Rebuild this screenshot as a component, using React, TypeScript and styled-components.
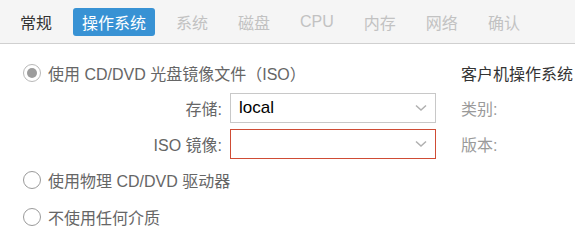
import styled, { createGlobalStyle } from "styled-components";

const GlobalStyle = createGlobalStyle`
  body {
    margin: 0;
    background: #ffffff;
    font-family: "Liberation Sans", "Noto Sans CJK SC", sans-serif;
  }
`;

const Page = styled.div`
  width: 575px;
  height: 246px;
  overflow: hidden;
  background: #ffffff;
`;

const TabBar = styled.div`
  height: 43px;
  display: flex;
  align-items: center;
  gap: 12px;
  padding-left: 11px;
  background: #f5f5f5;
  border-bottom: 1px solid #d0d0d0;
`;

const Tab = styled.div<{ $state: "normal" | "active" | "disabled" }>`
  height: 28px;
  display: flex;
  align-items: center;
  padding: 0 9px;
  border-radius: 3px;
  font-size: 16px;
  white-space: nowrap;
  background: ${(p) => (p.$state === "active" ? "#3892d4" : "transparent")};
  color: ${(p) =>
    p.$state === "active" ? "#ffffff" : p.$state === "disabled" ? "#c2c2c2" : "#333333"};
`;

const Body = styled.div`
  display: flex;
  padding: 19px 0 0 22px;
`;

const LeftColumn = styled.div`
  width: 415px;
  display: flex;
  flex-direction: column;
`;

const RightColumn = styled.div`
  margin-left: 24px;
  display: flex;
  flex-direction: column;
  white-space: nowrap;
`;

const RadioRow = styled.div<{ $gap?: number }>`
  height: 20px;
  display: flex;
  align-items: center;
  margin-top: ${(p) => p.$gap ?? 0}px;
  font-size: 16px;
  color: #666666;
  white-space: nowrap;
`;

const RadioCircle = styled.span<{ $checked?: boolean }>`
  box-sizing: border-box;
  width: 18px;
  height: 18px;
  margin-left: 1px;
  border-radius: 50%;
  border: 1.5px solid ${(p) => (p.$checked ? "#b8b8b8" : "#9a9a9a")};
  background: #ffffff;
  margin-right: 7px;
  display: flex;
  align-items: center;
  justify-content: center;
  &::after {
    content: "";
    display: ${(p) => (p.$checked ? "block" : "none")};
    width: 10px;
    height: 10px;
    border-radius: 50%;
    background: #9c9c9c;
  }
`;

const FieldRow = styled.div<{ $gap: number }>`
  height: 30px;
  display: flex;
  align-items: center;
  margin-top: ${(p) => p.$gap}px;
`;

const FieldLabel = styled.div`
  width: 200px;
  margin-right: 8px;
  text-align: right;
  font-size: 16px;
  color: #666666;
  white-space: nowrap;
`;

const Combo = styled.div<{ $invalid?: boolean }>`
  box-sizing: border-box;
  width: 206px;
  height: 30px;
  display: flex;
  align-items: center;
  padding: 0 8px;
  border: 1px solid ${(p) => (p.$invalid ? "#cf4c35" : "#c8c8c8")};
  background: #ffffff;
`;

const ComboValue = styled.span`
  flex: 1;
  font-size: 17px;
  color: #000000;
`;

const Heading = styled.div`
  height: 20px;
  display: flex;
  align-items: center;
  font-size: 16px;
  color: #333333;
`;

const SideLabel = styled.div<{ $gap: number }>`
  height: 30px;
  display: flex;
  align-items: center;
  margin-top: ${(p) => p.$gap}px;
  font-size: 16px;
  color: #9a9a9a;
`;

function Chevron() {
  return (
    <svg width="12" height="8" viewBox="0 0 12 8">
      <polyline points="1,1.5 6,6 11,1.5" fill="none" stroke="#b0b0b0" strokeWidth="1.5" />
    </svg>
  );
}

const tabs: { label: string; state: "normal" | "active" | "disabled" }[] = [
  { label: "常规", state: "normal" },
  { label: "操作系统", state: "active" },
  { label: "系统", state: "disabled" },
  { label: "磁盘", state: "disabled" },
  { label: "CPU", state: "disabled" },
  { label: "内存", state: "disabled" },
  { label: "网络", state: "disabled" },
  { label: "确认", state: "disabled" },
];

export default function App() {
  return (
    <Page>
      <GlobalStyle />
      <TabBar>
        {tabs.map((t) => (
          <Tab key={t.label} $state={t.state}>
            {t.label}
          </Tab>
        ))}
      </TabBar>
      <Body>
        <LeftColumn>
          <RadioRow>
            <RadioCircle $checked />
            使用 CD/DVD 光盘镜像文件（ISO）
          </RadioRow>
          <FieldRow $gap={10}>
            <FieldLabel>存储:</FieldLabel>
            <Combo>
              <ComboValue>local</ComboValue>
              <Chevron />
            </Combo>
          </FieldRow>
          <FieldRow $gap={6}>
            <FieldLabel>ISO 镜像:</FieldLabel>
            <Combo $invalid>
              <ComboValue />
              <Chevron />
            </Combo>
          </FieldRow>
          <RadioRow $gap={11}>
            <RadioCircle />
            使用物理 CD/DVD 驱动器
          </RadioRow>
          <RadioRow $gap={17}>
            <RadioCircle />
            不使用任何介质
          </RadioRow>
        </LeftColumn>
        <RightColumn>
          <Heading>客户机操作系统</Heading>
          <SideLabel $gap={10}>类别:</SideLabel>
          <SideLabel $gap={6}>版本:</SideLabel>
        </RightColumn>
      </Body>
    </Page>
  );
}
